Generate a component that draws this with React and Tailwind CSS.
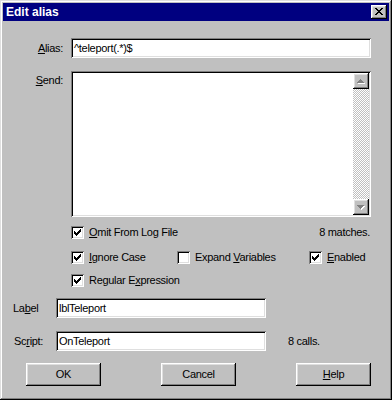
import React from "react";

const raised =
  "shadow-[inset_-1px_-1px_#000,inset_1px_1px_#fff,inset_-2px_-2px_#808080,inset_2px_2px_#dfdfdf]";
const sunken =
  "shadow-[inset_1px_1px_#808080,inset_-1px_-1px_#fff,inset_2px_2px_#000,inset_-2px_-2px_#dfdfdf]";

function Check() {
  return (
    <svg width="7" height="7" viewBox="0 0 7 7" shapeRendering="crispEdges" className="block">
      <path
        fill="#000"
        d="M0 2h1v3H0z M1 3h1v3H1z M2 4h1v3H2z M3 3h1v3H3z M4 2h1v3H4z M5 1h1v3H5z M6 0h1v3H6z"
      />
    </svg>
  );
}

function Checkbox({ checked, children }) {
  return (
    <div className="flex items-center h-[13px]">
      <div className={`w-[13px] h-[13px] bg-white shrink-0 pl-[3px] pt-[3px] ${sunken}`}>
        {checked && <Check />}
      </div>
      <span className="ml-[5px] leading-[13px] whitespace-nowrap">{children}</span>
    </div>
  );
}

function Arrow({ down }) {
  // disabled arrow: grey glyph with white shadow offset
  const up = "M3 0h1v1H3z M2 1h3v1H2z M1 2h5v1H1z M0 3h7v1H0z";
  const dn = "M0 0h7v1H0z M1 1h5v1H1z M2 2h3v1H2z M3 3h1v1H3z";
  return (
    <svg width="8" height="5" viewBox="0 0 8 5" shapeRendering="crispEdges" className="block">
      <path fill="#fff" transform="translate(1 1)" d={down ? dn : up} />
      <path fill="#808080" d={down ? dn : up} />
    </svg>
  );
}

function Field({ w, children }) {
  return (
    <div className={`${w} h-[20px] bg-white pl-[3px] flex items-center whitespace-nowrap ${sunken}`}>
      {children}
    </div>
  );
}

function Button({ children }) {
  return (
    <div className={`w-[75px] h-[23px] flex items-center justify-center ${raised}`}>
      {children}
    </div>
  );
}

export default function App() {
  return (
    <div
      className={`w-[392px] h-[400px] bg-[#c0c0c0] p-[3px] text-black text-[11px] tracking-[-0.3px] font-['Liberation_Sans',Arial,sans-serif] shadow-[inset_-1px_-1px_#000,inset_1px_1px_#dfdfdf,inset_-2px_-2px_#808080,inset_2px_2px_#fff] select-none`}
    >
      {/* title bar */}
      <div className="h-[18px] bg-[#000080] flex items-center justify-between pl-[3px] pr-[2px]">
        <span className="text-white font-bold text-[12px] tracking-normal leading-none">Edit alias</span>
        <div className={`w-[16px] h-[14px] bg-[#c0c0c0] pl-[4px] pt-[3px] ${raised}`}>
          <svg width="8" height="7" viewBox="0 0 8 7" shapeRendering="crispEdges" className="block">
            <path
              fill="#000"
              d="M0 0h2v1H0z M6 0h2v1H6z M1 1h2v1H1z M5 1h2v1H5z M2 2h4v1H2z M3 3h2v1H3z M2 4h4v1H2z M1 5h2v1H1z M5 5h2v1H5z M0 6h2v1H0z M6 6h2v1H6z"
            />
          </svg>
        </div>
      </div>

      {/* alias */}
      <div className="mt-[17px] flex items-center h-[20px]">
        <div className="w-[68px] text-right pr-[8px]">
          <span className="underline">A</span>lias:
        </div>
        <Field w="w-[300px]">^teleport(.*)$</Field>
      </div>

      {/* send */}
      <div className="mt-[13px] flex">
        <div className="w-[68px] text-right pr-[8px] pt-[1px]">
          <span className="underline">S</span>end:
        </div>
        <div className={`w-[300px] h-[146px] bg-white p-[2px] flex ${sunken}`}>
          <div className="flex-1" />
          <div className="w-[16px] flex flex-col">
            <div className={`h-[16px] bg-[#c0c0c0] flex items-center justify-center ${raised}`}>
              <Arrow />
            </div>
            <div className="flex-1 bg-[repeating-conic-gradient(#c0c0c0_0_25%,#fff_0_50%)] bg-[length:2px_2px]" />
            <div className={`h-[16px] bg-[#c0c0c0] flex items-center justify-center ${raised}`}>
              <Arrow down />
            </div>
          </div>
        </div>
      </div>

      {/* options */}
      <div className="ml-[68px] w-[300px]">
        <div className="mt-[9px] flex items-center justify-between pr-[1px]">
          <Checkbox checked>
            <span className="underline">O</span>mit From Log File
          </Checkbox>
          <span className="leading-[13px]">8 matches.</span>
        </div>
        <div className="mt-[12px] flex items-center">
          <div className="w-[106px]">
            <Checkbox checked>
              <span className="underline">I</span>gnore Case
            </Checkbox>
          </div>
          <div className="w-[132px]">
            <Checkbox>
              Expand <span className="underline">V</span>ariables
            </Checkbox>
          </div>
          <Checkbox checked>
            <span className="underline">E</span>nabled
          </Checkbox>
        </div>
        <div className="mt-[10px]">
          <Checkbox checked>
            Regular E<span className="underline">x</span>pression
          </Checkbox>
        </div>
      </div>

      {/* label / script */}
      <div className="mt-[11px] flex items-center h-[20px]">
        <div className="w-[53px] pl-[10px]">
          La<span className="underline">b</span>el
        </div>
        <Field w="w-[210px]">lblTeleport</Field>
      </div>
      <div className="mt-[13px] flex items-center h-[20px]">
        <div className="w-[53px] pl-[11px]">
          Sc<span className="underline">r</span>ipt:
        </div>
        <Field w="w-[210px]">OnTeleport</Field>
        <span className="ml-[22px]">8 calls.</span>
      </div>

      {/* buttons */}
      <div className="mt-[12px] flex pl-[23px] gap-[60px]">
        <Button>OK</Button>
        <Button>Cancel</Button>
        <Button>
          <span>
            <span className="underline">H</span>elp
          </span>
        </Button>
      </div>
    </div>
  );
}
